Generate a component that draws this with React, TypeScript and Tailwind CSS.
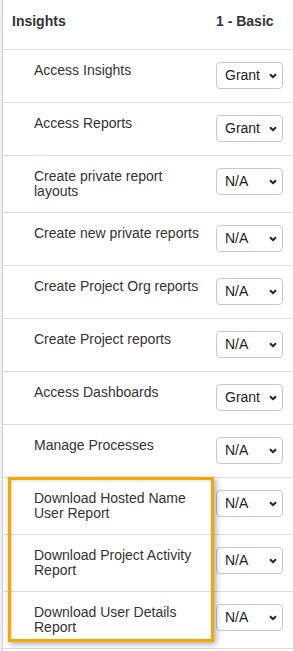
import React from "react";

type Perm = {
	label: string;
	value: "Grant" | "N/A";
};

const permissions: Perm[] = [
	{ label: "Access Insights", value: "Grant" },
	{ label: "Access Reports", value: "Grant" },
	{ label: "Create private report layouts", value: "N/A" },
	{ label: "Create new private reports", value: "N/A" },
	{ label: "Create Project Org reports", value: "N/A" },
	{ label: "Create Project reports", value: "N/A" },
	{ label: "Access Dashboards", value: "Grant" },
	{ label: "Manage Processes", value: "N/A" },
	{ label: "Download Hosted Name User Report", value: "N/A" },
	{ label: "Download Project Activity Report", value: "N/A" },
	{ label: "Download User Details Report", value: "N/A" },
];

function PermSelect({ value }: { value: string }) {
	return (
		<div className="relative w-[67px] h-[27px]">
			<select
				defaultValue={value}
				className="appearance-none w-full h-full rounded-[4px] border border-[#c9c9c9] bg-white pl-[8px] text-[14px] text-[#222] outline-none"
			>
				<option value="Grant">Grant</option>
				<option value="N/A">N/A</option>
				<option value="Deny">Deny</option>
			</select>
			<svg
				width="8"
				height="6"
				viewBox="0 0 8 6"
				className="pointer-events-none absolute right-[6px] top-[11px]"
			>
				<polyline
					points="1,1.2 4,4.2 7,1.2"
					fill="none"
					stroke="#222"
					strokeWidth="2"
				/>
			</svg>
		</div>
	);
}

export default function App() {
	return (
		<div
			className="relative flex w-[293px] h-[651px] overflow-hidden bg-white text-[#333]"
			style={{ fontFamily: '"Liberation Sans", Arial, sans-serif' }}
		>
			<div className="w-[3px] shrink-0 bg-[#efefef] border-r border-[#cfcfcf]" />

			<div className="flex-1">
				{/* header */}
				<div className="flex h-[50px] border-b border-[#dddddd] text-[14px] font-bold leading-[16px]">
					<div className="w-[212px] pl-[9px] pt-[13px]">Insights</div>
					<div className="pt-[13px] pl-[1px]">1 - Basic</div>
				</div>

				{permissions.map((p) => (
					<div key={p.label} className="flex border-b border-[#dddddd]">
						<div className="w-[212px] shrink-0 pl-[31px] pr-[9px] pt-[13px] pb-[13px] text-[14px] leading-[15px]">
							{p.label}
						</div>
						<div className="pt-[12px] pb-[13px] pl-[1px]">
							<PermSelect value={p.value} />
						</div>
					</div>
				))}
			</div>

			{/* highlight over the download rows */}
			<div className="pointer-events-none absolute left-[8px] top-[477px] w-[206px] h-[165px] border-[3px] border-[#f7a800] shadow-[2px_2px_6px_rgba(0,0,0,0.35),inset_1px_1px_3px_rgba(0,0,0,0.15)]" />
		</div>
	);
}
